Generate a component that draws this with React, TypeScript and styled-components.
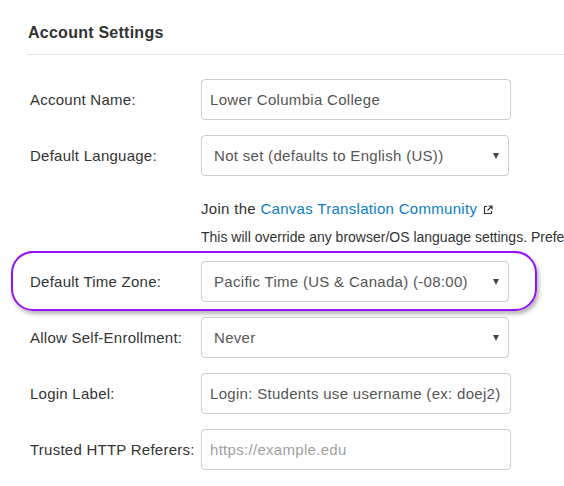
import styled, { createGlobalStyle } from 'styled-components'

const Global = createGlobalStyle`
  html, body {
    margin: 0;
    padding: 0;
    background: #fff;
    overflow: hidden;
  }
  body {
    font-family: "Liberation Sans", Arial, sans-serif;
    color: #333;
  }
`

const Page = styled.div`
  width: 640px;
  padding: 22px 0 0 28px;
`

const Heading = styled.h2`
  margin: 0;
  font-size: 16px;
  line-height: 22px;
  font-weight: bold;
  letter-spacing: 0.25px;
  color: #333;
`

const Rule = styled.hr`
  margin: 10px 0 24px -1px;
  border: 0;
  border-top: 1px solid #e3e3e3;
`

const Row = styled.div<{ $gap?: number }>`
  position: relative;
  display: grid;
  grid-template-columns: 173px 310px;
  width: 483px;
  align-items: center;
  margin-bottom: ${p => p.$gap ?? 15}px;
`

const Label = styled.label`
  padding-left: 2px;
  font-size: 15px;
  letter-spacing: 0.25px;
  color: #333;
  white-space: nowrap;
`

const TextInput = styled.input`
  box-sizing: border-box;
  width: 310px;
  height: 41px;
  padding: 0 8px;
  border: 1px solid #ccc;
  border-radius: 4px;
  font-family: inherit;
  font-size: 15px;
  letter-spacing: 0.3px;
  color: #555;
  outline: none;
  &::placeholder {
    color: #a0a0a0;
  }
`

const SelectWrap = styled.div`
  position: relative;
  width: 308px;
  &::after {
    content: '';
    position: absolute;
    right: 10px;
    top: 18px;
    border-left: 3.5px solid transparent;
    border-right: 3.5px solid transparent;
    border-top: 6px solid #444;
  }
`

const Select = styled.select`
  box-sizing: border-box;
  width: 100%;
  height: 41px;
  padding: 0 24px 0 12px;
  border: 1px solid #ccc;
  border-radius: 4px;
  background: #fff;
  appearance: none;
  font-family: inherit;
  font-size: 15px;
  letter-spacing: 0.3px;
  color: #555;
  outline: none;
`

const Help = styled.div`
  margin: 23px 0 14px 173px;
  line-height: 20px;
  white-space: nowrap;
  color: #333;
`

const HelpLine = styled.p<{ $size: number }>`
  margin: 0 0 8px;
  font-size: ${p => p.$size}px;
  letter-spacing: ${p => (p.$size > 14 ? 0.3 : 0)}px;
  &:last-child {
    margin: 0;
  }
`

const Link = styled.a`
  color: #0a7dc2;
  text-decoration: none;
`

const ExtIcon = styled.svg`
  margin-left: 6px;
  vertical-align: -1px;
`

const Highlight = styled.span`
  position: absolute;
  left: -17px;
  right: -26px;
  top: -10px;
  bottom: -9px;
  border: 2px solid #9510f8;
  border-radius: 22px;
  box-shadow: 2px 3px 4px rgba(0, 0, 0, 0.3);
  pointer-events: none;
`

export default function App() {
  return (
    <Page>
      <Global />
      <Heading>Account Settings</Heading>
      <Rule />
      <Row>
        <Label>Account Name:</Label>
        <TextInput defaultValue="Lower Columbia College" />
      </Row>
      <Row $gap={0}>
        <Label>Default Language:</Label>
        <SelectWrap>
          <Select defaultValue="none">
            <option value="none">Not set (defaults to English (US))</option>
          </Select>
        </SelectWrap>
      </Row>
      <Help>
        <HelpLine $size={15}>
          Join the <Link href="#">Canvas Translation Community</Link>
          <ExtIcon width="10" height="10" viewBox="0 0 10 10" fill="none" stroke="#333" strokeWidth="1.2">
            <path d="M4 1.5H1.5v7h7V6" />
            <path d="M5.5 1h3.5v3.5M9 1L4.5 5.5" />
          </ExtIcon>
        </HelpLine>
        <HelpLine $size={14}>
          This will override any browser/OS language settings. Preferred languages can still be set at the course/user level.
        </HelpLine>
      </Help>
      <Row>
        <Highlight />
        <Label>Default Time Zone:</Label>
        <SelectWrap>
          <Select defaultValue="pt">
            <option value="pt">Pacific Time (US &amp; Canada) (-08:00)</option>
          </Select>
        </SelectWrap>
      </Row>
      <Row>
        <Label>Allow Self-Enrollment:</Label>
        <SelectWrap>
          <Select defaultValue="never">
            <option value="never">Never</option>
          </Select>
        </SelectWrap>
      </Row>
      <Row>
        <Label>Login Label:</Label>
        <TextInput defaultValue="Login: Students use username (ex: doej2)" />
      </Row>
      <Row>
        <Label>Trusted HTTP Referers:</Label>
        <TextInput placeholder="https://example.edu" />
      </Row>
    </Page>
  )
}
